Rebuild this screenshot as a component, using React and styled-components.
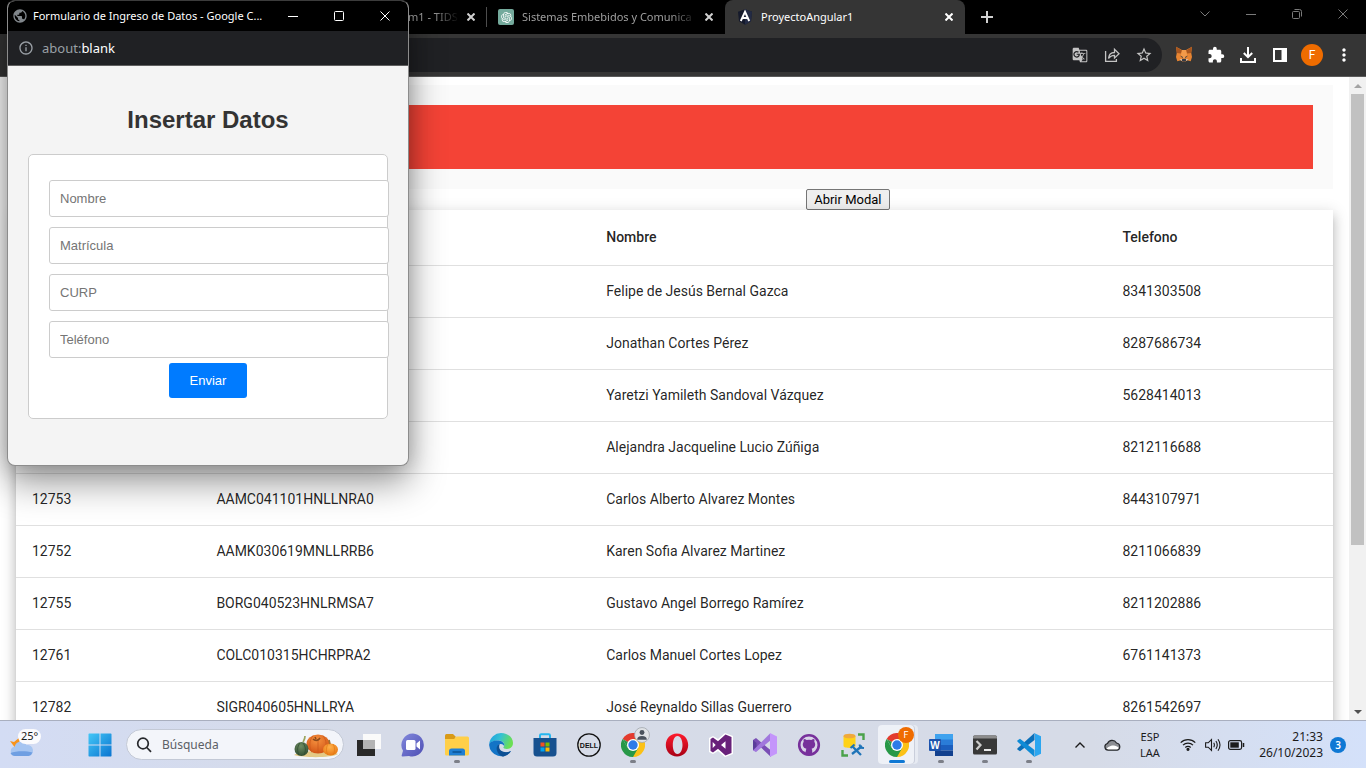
import React from "react";
import styled, { createGlobalStyle, css } from "styled-components";
import { MdGTranslate, MdStarBorder, MdExtension, MdMoreVert, MdPublic, MdInfoOutline } from "react-icons/md";
import { RiOpenaiFill } from "react-icons/ri";

const ui = `"Noto Sans", "Open Sans", sans-serif`;
const arial = `"Liberation Sans", Arial, sans-serif`;

const GlobalStyle = createGlobalStyle`
  *, *::before, *::after { box-sizing: border-box; }
  html, body { margin: 0; height: 100%; overflow: hidden; }
  body { font-family: Roboto, sans-serif; background: #fff; }
  button { font: inherit; color: inherit; }
  svg { display: block; flex: none; }
`;

/* ---------- Shared ---------- */

const Desktop = styled.div`
  display: flex;
  flex-direction: column;
  height: 100vh;
  position: relative;
`;

const IconButton = styled.button`
  display: flex;
  align-items: center;
  justify-content: center;
  flex: none;
  width: ${(p) => p.$w || 32}px;
  height: ${(p) => p.$h || 32}px;
  padding: 0;
  border: 0;
  background: transparent;
  color: ${(p) => p.$color || "#fff"};
`;

/* ---------- Browser chrome ---------- */

const TabStrip = styled.header`
  display: flex;
  flex: none;
  height: 34px;
  padding-left: 408px;
  background: #000;
  font: 12px/16px ${ui};
`;

const Tab = styled.div`
  display: flex;
  align-items: center;
  flex: 0 1 auto;
  min-width: 0;
  width: ${(p) => p.$w}px;
  padding: 0 8px 0 ${(p) => (p.$cut ? 0 : p.$active ? 12 : 11)}px;
  color: #9f9f9f;
  ${(p) =>
    p.$active &&
    css`
      background: #353535;
      color: #fff;
      border-radius: 8px 8px 0 0;
    `}
  ${(p) =>
    p.$divider &&
    css`
      background: linear-gradient(#4d4d4d, #4d4d4d) right center / 1px 20px no-repeat;
    `}
`;

const TabTitle = styled.span`
  flex: 1;
  min-width: 0;
  margin-left: ${(p) => (p.$cut ? 0 : 8)}px;
  overflow: hidden;
  white-space: nowrap;
  font-size: 11px;
  ${(p) =>
    p.$fade &&
    css`
      mask-image: linear-gradient(to right, #000 calc(100% - 30px), transparent calc(100% - 4px));
    `}
`;

const GptIcon = styled.span`
  display: flex;
  align-items: center;
  justify-content: center;
  width: 16px;
  height: 16px;
  flex: none;
  border-radius: 2px;
  background: #74aa9c;
  color: #fff;
`;

const WindowControls = styled.div`
  display: flex;
  margin-left: auto;
  height: 30px;
`;

const Toolbar = styled.div`
  display: flex;
  align-items: center;
  flex: none;
  height: 43px;
  padding: 0 6px 1px 8px;
  background: #353535;
  border-bottom: 1px solid #5a5a5a;
`;

const Omnibox = styled.div`
  display: flex;
  align-items: center;
  justify-content: flex-end;
  flex: 1;
  height: 34px;
  margin-right: 6px;
  padding-right: 2px;
  border-radius: 17px;
  background: #202124;
`;

const Avatar = styled.span`
  display: flex;
  align-items: center;
  justify-content: center;
  width: ${(p) => p.$size}px;
  height: ${(p) => p.$size}px;
  border-radius: 50%;
  background: #ef6c00;
  color: #fff;
  font: ${(p) => (p.$size > 18 ? 12 : 9)}px/1 Roboto, sans-serif;
`;

/* ---------- Web page ---------- */

const Viewport = styled.div`
  display: flex;
  flex: 1;
  min-height: 0;
  background: #fff;
`;

const Page = styled.main`
  flex: 1;
  min-width: 0;
  overflow: hidden;
  padding: 8px 16px 0;
`;

const Banner = styled.div`
  padding: 20px;
  background: #fafafa;
`;

const RedBar = styled.div`
  height: 64px;
  background: #f44336;
`;

const OpenModal = styled.button`
  display: block;
  height: 21px;
  margin-left: 60%;
  padding: 0 7px;
  border: 1px solid #767676;
  border-radius: 2px;
  background: #efefef;
  color: #000;
  font: 13px/19px Roboto, sans-serif;
`;

const Table = styled.table`
  width: 100%;
  table-layout: fixed;
  border-collapse: separate;
  border-spacing: 0;
  background: #fff;
  color: rgba(0, 0, 0, 0.87);
  font: 14px/20px Roboto, sans-serif;
  box-shadow: 0 5px 5px -3px rgba(0, 0, 0, 0.2), 0 8px 10px 1px rgba(0, 0, 0, 0.14),
    0 3px 14px 2px rgba(0, 0, 0, 0.12);
`;

const Col = styled.col`
  width: ${(p) => p.$w};
`;

const Th = styled.th`
  height: 56px;
  padding: 0 16px 2px;
  text-align: left;
  font-weight: 500;
  border-bottom: 1px solid #e0e0e0;
`;

const Td = styled.td`
  height: 52px;
  padding: 0 16px 2px;
  border-bottom: 1px solid #e0e0e0;
`;

const ScrollTrack = styled.div`
  display: flex;
  flex-direction: column;
  align-items: center;
  flex: none;
  width: 17px;
  background: #f1f1f1;
`;

const ScrollArrow = styled.div`
  display: flex;
  align-items: center;
  justify-content: center;
  width: 17px;
  height: 17px;
`;

const ScrollRail = styled.div`
  flex: 1;
  width: 13px;
`;

const ScrollThumb = styled.div`
  height: 74%;
  background: #c1c1c1;
`;

/* ---------- Popup window ---------- */

const Popup = styled.section`
  position: absolute;
  top: 0;
  left: 7px;
  width: 402px;
  height: 466px;
  display: flex;
  flex-direction: column;
  overflow: hidden;
  border: 1px solid #4a4a4a;
  border-color: #3c3c3c #8c8c8c #8c8c8c;
  border-radius: 8px;
  background: #f4f4f4;
  box-shadow: 0 16px 36px rgba(0, 0, 0, 0.42), 0 0 20px rgba(0, 0, 0, 0.16);
`;

const PopupTitle = styled.div`
  display: flex;
  align-items: center;
  flex: none;
  height: 30px;
  padding-left: 4px;
  background: #000;
  color: #fff;
  font: 11px/16px ${ui};
  white-space: nowrap;

  span {
    flex: 1;
    margin-left: 5px;
  }
`;

const PopupUrl = styled.div`
  display: flex;
  align-items: center;
  flex: none;
  gap: 8px;
  height: 35px;
  padding-left: 10px;
  background: #202124;
  border-bottom: 1px solid #5f5f5f;
  color: #9aa0a6;
  font: 13px/18px ${ui};

  b {
    color: #fff;
    font-weight: 400;
  }
`;

const PopupBody = styled.div`
  padding: 20px;
  text-align: center;
  font-family: ${arial};
`;

const Heading = styled.h2`
  margin: 20px 0;
  color: #333;
  font-size: 24px;
  line-height: 28px;
`;

const Form = styled.form`
  padding: 20px;
  border: 1px solid #ccc;
  border-radius: 5px;
  background: #fff;
`;

const Field = styled.input`
  box-sizing: content-box;
  display: block;
  width: 100%;
  height: 15px;
  margin: ${(p) => (p.$first ? 5 : 10)}px 0 0;
  padding: 10px;
  border: 1px solid #ccc;
  border-radius: 3px;
  background: #fff;
  font: 13px/15px ${arial};

  &::placeholder {
    color: #757575;
  }
`;

const Submit = styled.button`
  min-width: 78px;
  height: 35px;
  margin-top: 5px;
  padding: 0 16px;
  border: 0;
  border-radius: 3px;
  background: #007bff;
  color: #fff;
  font: 13px/15px ${arial};
  vertical-align: top;
`;

/* ---------- Taskbar ---------- */

const Taskbar = styled.footer`
  display: flex;
  align-items: center;
  flex: none;
  position: relative;
  height: 48px;
  border-top: 1px solid #a9afbf;
  background: linear-gradient(90deg, #d3dcf4 0, #d6dbe8 26%, #d6dbe7 80%, #d4e1fa 100%);
  color: #1b1b1b;
  font: 12px/16px ${ui};
`;

const Weather = styled.div`
  flex: none;
  width: 78px;
  padding: 0 0 4px 8px;
`;

const Search = styled.label`
  display: flex;
  align-items: center;
  flex: none;
  width: 218px;
  height: 31px;
  margin: 0 3px 0 4px;
  padding: 0 4px 0 9px;
  border: 1px solid #c3c9d6;
  border-radius: 16px;
  background: #f3f5fa;
`;

const SearchInput = styled.input`
  flex: 1;
  min-width: 0;
  margin-left: 10px;
  padding: 0;
  border: 0;
  background: transparent;
  font: 12px/16px ${ui};

  &::placeholder {
    color: #5c5f66;
    opacity: 1;
  }
`;

const AppButton = styled.button`
  position: relative;
  display: flex;
  align-items: center;
  justify-content: center;
  flex: none;
  width: 44px;
  height: 47px;
  padding: 0;
  border: 0;
  background: transparent;

  ${(p) =>
    p.$running &&
    css`
      &::after {
        content: "";
        position: absolute;
        bottom: 5px;
        left: calc(50% - 3px);
        width: 6px;
        height: 3px;
        border-radius: 2px;
        background: #7c7f88;
      }
    `}
  ${(p) =>
    p.$active &&
    css`
      &::before {
        content: "";
        position: absolute;
        inset: 4px 5px 4px 3px;
        border-radius: 4px;
        background: #eef1f7;
        box-shadow: 1px 0 0 #c9cedb, 4px 0 0 #e6eaf2;
      }
      &::after {
        left: calc(50% - 8px);
        width: 16px;
        background: #0f78d4;
      }
    `}
  svg {
    position: relative;
  }
`;

const AppBadge = styled.span`
  position: absolute;
  top: 6px;
  right: 5px;
`;

const Tray = styled.div`
  display: flex;
  align-items: center;
  margin-left: auto;
  padding-right: 20px;
`;

const TrayText = styled.div`
  width: ${(p) => p.$w}px;
  text-align: ${(p) => p.$align || "center"};
  font-size: ${(p) => (p.$align ? 12 : 11)}px;
`;

const Count = styled.span`
  display: flex;
  align-items: center;
  justify-content: center;
  width: 16px;
  height: 16px;
  margin-left: 7px;
  border-radius: 50%;
  background: #0f78d4;
  color: #fff;
  font-size: 10px;
  font-weight: 600;
`;

/* ---------- Icons ---------- */

const Close = ({ s = 8, w = 2 }) => (
  <svg width={s} height={s} viewBox={`0 0 ${s} ${s}`} stroke="currentColor" strokeWidth={w} fill="none">
    <path d={`M.5.5 ${s - 0.5} ${s - 0.5}M${s - 0.5} .5.5 ${s - 0.5}`} />
  </svg>
);
const Minimize = () => (
  <svg width="10" height="10" stroke="currentColor"><path d="M0 5.500h10" /></svg>
);
const Maximize = () => (
  <svg width="10" height="10" stroke="currentColor" fill="none"><rect x=".5" y=".5" width="9" height="9" rx="1" /></svg>
);
const Restore = () => (
  <svg width="10" height="10" stroke="currentColor" fill="none">
    <rect x=".5" y="2.500" width="7" height="7" rx="1" />
    <path d="M2.500.5h5a2 2 0 0 1 2 2v5" />
  </svg>
);
const Chevron = ({ up, s = 10 }) => (
  <svg width={s} height="6" viewBox="0 0 10 6" stroke="currentColor" fill="none" strokeWidth={up ? 1.4 : 1}>
    <path d={up ? "M.5 5.500 5 1l4.500 4.500" : "M.5.5 5 5 9.500.5"} />
  </svg>
);
const AngularIcon = () => (
  <svg width="16" height="16" viewBox="0 0 16 16">
    <path d="M8 .3 15 2.800l-1 9.400L8 15.800l-6-3.600L1 2.800z" fill="#151a2c" />
    <path d="M8 .3v15.500l6-3.600 1-9.400z" fill="#232b45" />
    <path d="M3.800 12 8 2.800 12.200 12M5.600 9h4.800" stroke="#fff" strokeWidth="1.900" fill="none" />
  </svg>
);
const Share = () => (
  <svg width="16" height="16" viewBox="0 0 16 16" fill="none" stroke="currentColor" strokeWidth="1.300">
    <path d="M1.600 4v10.400h10.800V12" />
    <path d="M4.500 11.500c.3-3.800 2.500-6 6-6V2.300L15 6.800l-4.500 4.300V8.300c-2.700 0-4.600 1-6 3.200z" />
  </svg>
);
const Fox = () => (
  <svg width="18" height="17" viewBox="0 0 18 17">
    <path d="M1 .8 7 4h4l6-3.200-.8 6L17 11l-1.300 4.200-3.600-1L10 16H8l-2.100-1.800-3.600 1L1 11l.8-4.200z" fill="#e88532" />
    <path d="M1 .8 7 4.500 6 7.500 1.800 7zM17 .8l-6 3.700 1 3 4.200-.5z" fill="#a8561f" />
    <path d="M7 4h4l1 5-2 4H8l-2-4z" fill="#f29a4a" />
    <path d="M5 9.500 8 11l-.5 1zM13 9.500 10 11l.5 1z" fill="#2b3647" />
    <path d="M7.200 12.800h3.600l.3 1.800-1 1.200H7.900l-1-1.200z" fill="#353b45" />
    <path d="M4.500 13.500 7 13l-.2 2zM13.500 13.500 11 13l.2 2z" fill="#dac6b4" />
  </svg>
);
const Download = () => (
  <svg width="16" height="16" viewBox="0 0 16 16" fill="none" stroke="currentColor" strokeWidth="2">
    <path d="M8 0v10M3.800 6 8 10.200 12.200 6M1 11v4h14v-4" />
  </svg>
);
const SidePanel = () => (
  <svg width="14" height="14" viewBox="0 0 14 14">
    <rect x="1" y="1" width="12" height="12" fill="none" stroke="currentColor" strokeWidth="2" />
    <path d="M8.500 1H13v12H8.500z" fill="currentColor" />
  </svg>
);
const WeatherIcon = () => (
  <svg width="36" height="32" viewBox="0 0 36 32" role="img" aria-label="25°">
    <path d="M2 14l4 1 6-5-1 7-3 5-3-4z" fill="#f7941d" />
    <path d="M7 29a4.700 4.700 0 0 1-.4-9.300 6.500 6.500 0 0 1 12-1.500A5.400 5.400 0 0 1 20.500 29z" fill="#a6c5f1" />
    <path d="M7 29a5 5 0 0 1-4.500-3c5-2 15-2.500 22-.5a5 5 0 0 1-4 3.500z" fill="#6f9fe2" />
    <rect x="10" y="2" width="23" height="15" rx="7.500" fill="#fbfbfd" />
    <text x="13" y="13" fontFamily="Noto Sans, sans-serif" fontSize="11" fill="#1b1b1b">25°</text>
  </svg>
);
const StartIcon = () => (
  <svg width="24" height="24" viewBox="0 0 24 24">
    <defs>
      <linearGradient id="win" x1="0" y1="0" x2="1" y2="1" gradientUnits="objectBoundingBox">
        <stop offset="0" stopColor="#43c7f7" /><stop offset="1" stopColor="#0a74d0" />
      </linearGradient>
    </defs>
    <path d="M1 .5h10.500V11.500H.5V1zM12.500.5H23l.5.5v10.500h-11zM.5 12.500h11v11H1l-.5-.5zM12.500 12.500h11V23l-.5.5H12.500z" fill="url(#win)" />
  </svg>
);
const SearchIcon = () => (
  <svg width="16" height="16" viewBox="0 0 16 16" fill="none" stroke="#26282c" strokeWidth="1.700">
    <circle cx="7" cy="6.500" r="5.300" /><path d="m10.800 10.500 4.200 4.300" />
  </svg>
);
const Pumpkins = () => (
  <svg width="46" height="26" viewBox="0 0 46 26">
    <defs>
      <radialGradient id="pump" cx=".45" cy=".3" r=".75">
        <stop offset="0" stopColor="#f6923f" /><stop offset="1" stopColor="#cf4f12" />
      </radialGradient>
      <radialGradient id="pumpS" cx=".45" cy=".3" r=".75">
        <stop offset="0" stopColor="#ffb04a" /><stop offset="1" stopColor="#e7740f" />
      </radialGradient>
      <radialGradient id="pumpG" cx=".45" cy=".3" r=".75">
        <stop offset="0" stopColor="#6d8c62" /><stop offset="1" stopColor="#2f4b31" />
      </radialGradient>
    </defs>
    <path d="M1 23c8-5 36-5 44-1-6 4-34 4-44 1z" fill="#e3c985" />
    <ellipse cx="25" cy="12" rx="11.500" ry="9.500" fill="url(#pump)" />
    <path d="M20 3.500c-4 5-4 12-1 17M30 3.500c4 5 4 12 1 17M25 7v14" stroke="#c9561a" strokeWidth=".7" fill="none" />
    <path d="M20 7c2 2 5 2 7-1M23 7l-1-2" stroke="#8b4a1b" strokeWidth="1.600" fill="none" />
    <ellipse cx="8.500" cy="17" rx="7" ry="7" fill="url(#pumpG)" />
    <path d="M7 11c-3 4-3 8-1 12M10 11c3 4 3 8 1 12" stroke="#2c4a2e" strokeWidth=".7" fill="none" />
    <path d="M10 10c1-2 2-3 2-6" stroke="#9ba560" strokeWidth="1.700" fill="none" />
    <ellipse cx="37.500" cy="17.500" rx="7.500" ry="6" fill="url(#pumpS)" />
    <path d="M35 12c-2 3-2 8 0 11M40 12c2 3 2 8 0 11" stroke="#e07a14" strokeWidth=".7" fill="none" />
    <path d="m37 12-1-4" stroke="#a07030" strokeWidth="1.700" />
  </svg>
);
const TaskView = () => (
  <svg width="24" height="24" viewBox="0 0 24 24">
    <rect x="6" y="1" width="18" height="15" fill="#fafafa" />
    <rect y="7" width="18" height="16" fill="#292929" />
    <rect x="6" y="7" width="12" height="9" fill="#b4b4b4" />
  </svg>
);
const Chat = () => (
  <svg width="24" height="24" viewBox="0 0 24 24">
    <defs>
      <linearGradient id="chat" x1="0" y1="0" x2="1" y2="1">
        <stop offset="0" stopColor="#8288dc" /><stop offset="1" stopColor="#4e4fb4" />
      </linearGradient>
    </defs>
    <path d="M12 .5A11.500 11.500 0 1 1 8 23l-6.500.5c-.8 0-1-.6-.8-1.200l1.300-4.500A11.500 11.500 0 0 1 12 .5z" fill="url(#chat)" />
    <rect x="5" y="7" width="9.500" height="10" rx="1.500" fill="#fff" />
    <path d="m15.500 10.500 3.500-3v9l-3.500-3z" fill="#fff" />
  </svg>
);
const Folder = () => (
  <svg width="24" height="24" viewBox="0 0 24 24">
    <path d="M0 2.500Q0 1 1.500 1H8l2.500 2.500V10H0z" fill="#d99a17" />
    <path d="M0 6h9l2.500-2.500h11Q24 3.500 24 5v16q0 1.500-1.500 1.500h-21Q0 22.500 0 21z" fill="#ffcf48" />
    <path d="M4 22.500V18q0-2.500 2.500-2.500h11Q20 15.500 20 18v4.500z" fill="#1f7fd3" />
    <path d="M7.500 19h9" stroke="#0b5394" strokeWidth="1.500" />
  </svg>
);
const Edge = () => (
  <svg width="24" height="24" viewBox="0 0 24 24">
    <defs>
      <linearGradient id="edgeTop" x1="0" y1="0" x2="1" y2=".3">
        <stop offset="0" stopColor="#1b9de2" /><stop offset=".5" stopColor="#35c1d3" /><stop offset="1" stopColor="#6bdf54" />
      </linearGradient>
    </defs>
    <path d="M.2 11A12 12 0 0 1 12 0c7 0 12 4.600 12 10 0 4-3 6-6.300 6-2.700 0-4-1-3-2.300C16.500 11.500 14.500 7.500 9 7.500 5 7.500 1.800 9 .2 11z" fill="url(#edgeTop)" />
    <path d="M.1 12C.3 9 4 7.500 8.500 7.500c5 0 7.500 3 6.700 5.500-1-2-3-2.500-4.500-1.800C7 13 8 19 16 19.500c2.500.1 4.500-.5 6-1.500A12 12 0 0 1 .1 12z" fill="#1374c6" />
    <path d="M10.700 11.200C6 12 6.500 21 14 23.800A12 12 0 0 0 22 18c-6 3-14 0-11.300-6.800z" fill="#0c4f94" />
  </svg>
);
const Store = () => (
  <svg width="24" height="24" viewBox="0 0 24 24">
    <path d="M7 6V2.500q0-1.200 1.200-1.200h7.600Q17 1.300 17 2.500V6" fill="none" stroke="#25b6ef" strokeWidth="2" />
    <path d="M.5 5h23v15q0 3.500-3.500 3.500H4Q.5 23.500.5 20z" fill="#17518f" />
    <path d="M7.500 9.500h4v4h-4z" fill="#f25022" /><path d="M12.500 9.500h4v4h-4z" fill="#7fba00" />
    <path d="M7.500 14.500h4v4h-4z" fill="#00a4ef" /><path d="M12.500 14.500h4v4h-4z" fill="#ffb900" />
  </svg>
);
const Dell = () => (
  <svg width="24" height="24" viewBox="0 0 24 24" role="img" aria-label="DELL">
    <circle cx="12" cy="12" r="11.200" fill="none" stroke="#111" strokeWidth="1.300" />
    <text x="12" y="15" textAnchor="middle" fontFamily="Liberation Sans, sans-serif" fontWeight="700" fontSize="7" fill="#111">DELL</text>
  </svg>
);
const Chrome = () => (
  <svg width="24" height="24" viewBox="0 0 24 24">
    <path d="M12 12 1.600 6A12 12 0 0 1 22.400 6z" fill="#e33b2e" />
    <path d="M12 12V6h10.400A12 12 0 0 1 12 24z" fill="#fbc116" />
    <path d="M12 12l5.200 3L12 24A12 12 0 0 1 1.600 6l5.200 9z" fill="#279847" />
    <path d="M1.600 6 6.800 15 12 12z" fill="#279847" />
    <circle cx="12" cy="12" r="6" fill="#fff" /><circle cx="12" cy="12" r="4.700" fill="#2d7be8" />
  </svg>
);
const Person = () => (
  <svg width="16" height="16" viewBox="0 0 15 15">
    <circle cx="7.500" cy="7.500" r="7" fill="#dfe2e6" stroke="#9fa4ab" strokeWidth=".7" />
    <circle cx="7.500" cy="5.200" r="2.300" fill="#4a525d" />
    <path d="M3 12q0-3.500 4.500-3.500T12 12z" fill="#4a525d" />
  </svg>
);
const Opera = () => (
  <svg width="24" height="24" viewBox="0 0 24 24">
    <defs>
      <linearGradient id="opera" x1="0" y1="0" x2="0" y2="1">
        <stop offset="0" stopColor="#ff1b2d" /><stop offset="1" stopColor="#a70014" />
      </linearGradient>
    </defs>
    <path fillRule="evenodd" d="M12 .5c6.500 0 11.200 5 11.200 11.500S18.500 23.500 12 23.500.8 18.500.8 12 5.500.5 12 .5zM12.500 3C9.300 3 7.800 7.500 7.800 12s1.500 9 4.700 9 5-4.500 5-9-1.800-9-5-9z" fill="url(#opera)" />
  </svg>
);
const VisualStudio = ({ dark }) => (
  <svg width="24" height="24" viewBox="0 0 24 24">
    {dark && <path d="M16 0 24 3v18l-8 3-7-6-5 3-4-2V5l4-2 5 3z" fill="#fff" />}
    {dark ? (
      <path fillRule="evenodd" d="M16.500 1.500 22.500 4v16l-6 2.500L9 15.800 4 19.500 1.500 18V6L4 4.500 9 8.200zM16.500 8.300 12 12l4.500 3.700zM3.700 9v6l3-3z" fill="#68217a" />
    ) : (
      <>
        <path d="M0 7 3 5l15 12.500V24L7.500 14 3 18.500 0 17z" fill="#7a4fb5" />
        <path d="M0 17V7l3.500 3v4z" fill="#5b3d9b" />
        <path d="M0 17.500 17 .5 18 7 3 19z" fill="#a178dd" />
        <path d="M17 0 24 3.500v17L17 24z" fill="#c495fb" />
      </>
    )}
  </svg>
);
const GitHub = () => (
  <svg width="24" height="24" viewBox="0 0 24 24">
    <circle cx="12" cy="12" r="9.800" fill="#d9d3e8" stroke="#77309b" strokeWidth="2.600" />
    <path d="M6.800 6c1.200 0 2 .4 2.800 1q2.400-.6 4.800 0c.8-.6 1.600-1 2.800-1 .4 1 .4 1.800.1 2.700 1.700 2.300 1.100 6.300-2.700 7 .5.600.6 1.300.6 2v4.500H8.800v-2.400c-2 .3-2.700-.5-3.300-1.600 1.500.2 1.700.700 3.300.500.1-1.200.1-2.200.6-3-3.800-.7-4.400-4.700-2.700-7-.3-.9-.3-1.700.1-2.700z" fill="#77309b" />
  </svg>
);
const SqlTools = () => (
  <svg width="24" height="24" viewBox="0 0 24 24">
    <path d="M2.500 3v10c0 2.500 12 2.500 12 0V3z" fill="#ffd218" />
    <ellipse cx="8.500" cy="3" rx="6" ry="2.300" fill="#f0a93c" />
    <path d="M17 1.500h5.500V7M1.500 17v5.500H7" fill="none" stroke="#4aa24a" strokeWidth="2.400" />
    <path d="m11 21 10-8M11 13l9 9" stroke="#1f74b8" strokeWidth="2.300" />
    <path d="M9.500 15l4-3.500M18.500 11.500l1 3.300 3.500.2" stroke="#1f74b8" strokeWidth="2" fill="none" />
  </svg>
);
const Word = () => (
  <svg width="24" height="24" viewBox="0 0 24 24">
    <path d="M6 1h18v6H6z" fill="#3fa2ee" /><path d="M6 6.500h18V12H6z" fill="#2a7cd8" />
    <path d="M6 12h18v5.500H6z" fill="#1b5ebe" /><path d="M6 17.500h18V23H6z" fill="#12408e" />
    <rect y="6" width="12" height="12" rx="1" fill="#1d53ac" />
    <text x="6" y="15.500" textAnchor="middle" fontFamily="Liberation Sans, sans-serif" fontWeight="700" fontSize="10" fill="#fff">W</text>
  </svg>
);
const Terminal = () => (
  <svg width="24" height="20" viewBox="0 0 24 20">
    <rect width="24" height="19" y=".5" rx="1.500" fill="#383838" />
    <path d="M0 3.500V2Q0 .5 1.500.5h21Q24 .5 24 2v1.500z" fill="#8d8d8d" />
    <path d="m3.500 6 4 4-4 4.500" fill="none" stroke="#ccc" strokeWidth="2.200" />
    <path d="M11 15h7" stroke="#fff" strokeWidth="1.800" />
  </svg>
);
const VsCode = () => (
  <svg width="24" height="24" viewBox="0 0 24 24">
    <path d="M17.500 0v7L3 18.300.3 16.500v-1z" fill="#0b6fb8" />
    <path d="M.3 7.500 3 5.700 17.500 17v7L.3 8.500z" fill="#0f8bd6" />
    <path d="M17 0 24 3.200v17.600L17 24l1-1.500v-21z" fill="#2ba6f0" />
  </svg>
);
const CloudTray = () => (
  <svg width="17" height="12" viewBox="0 0 17 12">
    <path d="M4.200 11.200A3.400 3.400 0 0 1 3.500 4.500 5 5 0 0 1 12.500 4a3.700 3.700 0 0 1 .7 7.200z" fill="#8c8e93" />
    <path d="M2 10.500C3 8 7.500 6 10 6.500s5 2 5.200 3l-2 1.500H4z" fill="#fff" />
    <path d="M4.200 11.200A3.400 3.400 0 0 1 3.500 4.500 5 5 0 0 1 12.500 4a3.700 3.700 0 0 1 .7 7.200z" fill="none" stroke="#26282c" strokeWidth="1.200" />
  </svg>
);
const Wifi = () => (
  <svg width="16" height="13" viewBox="0 0 16 13" fill="none" stroke="#1b1b1b" strokeWidth="1.200">
    <path d="M.7 4.700a10.300 10.300 0 0 1 14.600 0M3 7.200a7 7 0 0 1 10 0M5.300 9.500a3.800 3.800 0 0 1 5.400 0" />
    <circle cx="8" cy="11.300" r="1" fill="#1b1b1b" />
  </svg>
);
const Volume = () => (
  <svg width="16" height="14" viewBox="0 0 16 14" fill="none" stroke="#1b1b1b" strokeWidth="1.100">
    <path d="M.6 4.800h2.600L6.500 1.500v11L3.200 9.200H.6zM8.700 4.800q1.400 2.200 0 4.400M10.900 3q2.700 4 0 8M13 1.300q4 5.700 0 11.400" />
  </svg>
);
const Battery = () => (
  <svg width="17" height="10" viewBox="0 0 17 10">
    <rect x=".6" y=".6" width="13" height="8.800" rx="1.800" fill="none" stroke="#1b1b1b" strokeWidth="1.200" />
    <rect x="2.300" y="2.300" width="8.500" height="5.400" fill="#1b1b1b" /><path d="M15.500 3v4" stroke="#1b1b1b" strokeWidth="1.500" />
  </svg>
);
const Triangle = ({ down }) => (
  <svg width="8" height="4" viewBox="0 0 8 4">
    <path d={down ? "M0 0h8L4 4z" : "M0 4h8L4 0z"} fill={down ? "#505050" : "#a3a3a3"} />
  </svg>
);

/* ---------- Data ---------- */

const rows = [
  ["", "", "Felipe de Jesús Bernal Gazca", "8341303508"],
  ["", "", "Jonathan Cortes Pérez", "8287686734"],
  ["", "", "Yaretzi Yamileth Sandoval Vázquez", "5628414013"],
  ["", "", "Alejandra Jacqueline Lucio Zúñiga", "8212116688"],
  ["12753", "AAMC041101HNLLNRA0", "Carlos Alberto Alvarez Montes", "8443107971"],
  ["12752", "AAMK030619MNLLRRB6", "Karen Sofia Alvarez Martinez", "8211066839"],
  ["12755", "BORG040523HNLRMSA7", "Gustavo Angel Borrego Ramírez", "8211202886"],
  ["12761", "COLC010315HCHRPRA2", "Carlos Manuel Cortes Lopez", "6761141373"],
  ["12782", "SIGR040605HNLLRYA", "José Reynaldo Sillas Guerrero", "8261542697"],
];

const apps = [
  { name: "Vista de tareas", icon: <TaskView /> },
  { name: "Chat", icon: <Chat /> },
  { name: "Explorador", icon: <Folder />, running: true },
  { name: "Edge", icon: <Edge /> },
  { name: "Store", icon: <Store /> },
  { name: "Dell", icon: <Dell /> },
  { name: "Chrome", icon: <Chrome />, running: true, badge: <Person /> },
  { name: "Opera", icon: <Opera /> },
  { name: "Visual Studio", icon: <VisualStudio dark /> },
  { name: "Visual Studio 2022", icon: <VisualStudio /> },
  { name: "GitHub", icon: <GitHub /> },
  { name: "SQL Server", icon: <SqlTools /> },
  { name: "Chrome F", icon: <Chrome />, running: true, active: true, badge: <Avatar $size={16}>F</Avatar> },
  { name: "Word", icon: <Word />, running: true },
  { name: "Terminal", icon: <Terminal />, running: true },
  { name: "VS Code", icon: <VsCode />, running: true },
];

const fields = ["Nombre", "Matrícula", "CURP", "Teléfono"];

export default function App() {
  return (
    <Desktop>
      <GlobalStyle />
      <TabStrip>
        <Tab $w={79} $cut $divider>
          <TabTitle $cut $fade>m1 - TIDS</TabTitle>
          <IconButton $w={16} $h={16} $color="#d0d0d0" aria-label="Cerrar pestaña"><Close /></IconButton>
        </Tab>
        <Tab $w={238}>
          <GptIcon><RiOpenaiFill size={13} /></GptIcon>
          <TabTitle $fade>Sistemas Embebidos y Comunica</TabTitle>
          <IconButton $w={16} $h={16} $color="#d0d0d0" aria-label="Cerrar pestaña"><Close /></IconButton>
        </Tab>
        <Tab $w={240} $active>
          <AngularIcon />
          <TabTitle>ProyectoAngular1</TabTitle>
          <IconButton $w={16} $h={16} aria-label="Cerrar pestaña"><Close /></IconButton>
        </Tab>
        <IconButton $w={44} $h={34} $color="#d0d0d0" aria-label="Nueva pestaña">
          <svg width="12" height="12" stroke="currentColor" strokeWidth="2"><path d="M6 0v12M0 6h12" /></svg>
        </IconButton>
        <WindowControls>
          <IconButton $w={46} $h={28} $color="#7a7a7a" aria-label="Buscar pestañas"><Chevron /></IconButton>
          <IconButton $w={46} $h={28} $color="#7a7a7a" aria-label="Minimizar"><Minimize /></IconButton>
          <IconButton $w={46} $h={28} $color="#7a7a7a" aria-label="Restaurar"><Restore /></IconButton>
          <IconButton $w={46} $h={28} $color="#7a7a7a" aria-label="Cerrar"><Close s={10} w={1} /></IconButton>
        </WindowControls>
      </TabStrip>
      <Toolbar>
        <Omnibox>
          <IconButton $color="#c4c4c4" aria-label="Traducir"><MdGTranslate size={16} /></IconButton>
          <IconButton $color="#c4c4c4" aria-label="Compartir"><Share /></IconButton>
          <IconButton $color="#c4c4c4" aria-label="Favorito"><MdStarBorder size={18} /></IconButton>
        </Omnibox>
        <IconButton aria-label="MetaMask"><Fox /></IconButton>
        <IconButton aria-label="Extensiones"><MdExtension size={18} /></IconButton>
        <IconButton aria-label="Descargas"><Download /></IconButton>
        <IconButton aria-label="Panel lateral"><SidePanel /></IconButton>
        <IconButton aria-label="Perfil"><Avatar $size={22}>F</Avatar></IconButton>
        <IconButton aria-label="Menú"><MdMoreVert size={20} /></IconButton>
      </Toolbar>

      <Viewport>
        <Page>
          <Banner><RedBar /></Banner>
          <OpenModal type="button">Abrir Modal</OpenModal>
          <Table>
            <colgroup>
              <Col $w="14%" /><Col $w="29.6%" /><Col $w="39.2%" /><Col $w="17.2%" />
            </colgroup>
            <thead>
              <tr><Th /><Th /><Th>Nombre</Th><Th>Telefono</Th></tr>
            </thead>
            <tbody>
              {rows.map((r) => (
                <tr key={r[3]}>{r.map((c, i) => <Td key={i}>{c}</Td>)}</tr>
              ))}
            </tbody>
          </Table>
        </Page>
        <ScrollTrack>
          <ScrollArrow><Triangle /></ScrollArrow>
          <ScrollRail><ScrollThumb /></ScrollRail>
          <ScrollArrow><Triangle down /></ScrollArrow>
        </ScrollTrack>
      </Viewport>

      <Popup>
        <PopupTitle>
          <MdPublic size={16} color="#80868b" />
          <span>Formulario de Ingreso de Datos - Google C...</span>
          <IconButton $w={46} $h={30} aria-label="Minimizar"><Minimize /></IconButton>
          <IconButton $w={46} $h={30} aria-label="Maximizar"><Maximize /></IconButton>
          <IconButton $w={46} $h={30} aria-label="Cerrar"><Close s={10} w={1} /></IconButton>
        </PopupTitle>
        <PopupUrl>
          <MdInfoOutline size={16} />
          <span>about:<b>blank</b></span>
        </PopupUrl>
        <PopupBody>
          <Heading>Insertar Datos</Heading>
          <Form onSubmit={(e) => e.preventDefault()}>
            {fields.map((f, i) => (
              <Field key={f} $first={i === 0} type="text" placeholder={f} aria-label={f} />
            ))}
            <Submit type="submit">Enviar</Submit>
          </Form>
        </PopupBody>
      </Popup>

      <Taskbar>
        <Weather><WeatherIcon /></Weather>
        <AppButton aria-label="Inicio"><StartIcon /></AppButton>
        <Search>
          <SearchIcon />
          <SearchInput type="text" placeholder="Búsqueda" aria-label="Búsqueda" />
          <Pumpkins />
        </Search>
        {apps.map((a) => (
          <AppButton key={a.name} aria-label={a.name} $running={a.running} $active={a.active}>
            {a.icon}
            {a.badge && <AppBadge>{a.badge}</AppBadge>}
          </AppButton>
        ))}
        <Tray>
          <IconButton $color="#1b1b1b" aria-label="Iconos ocultos"><Chevron up /></IconButton>
          <IconButton aria-label="OneDrive"><CloudTray /></IconButton>
          <TrayText $w={44}>ESP<br />LAA</TrayText>
          <IconButton $w={32} aria-label="Wi-Fi"><Wifi /></IconButton>
          <IconButton $w={18} aria-label="Volumen"><Volume /></IconButton>
          <IconButton $w={28} aria-label="Batería"><Battery /></IconButton>
          <TrayText $w={73} $align="right">21:33<br />26/10/2023</TrayText>
          <Count>3</Count>
        </Tray>
      </Taskbar>
    </Desktop>
  );
}
